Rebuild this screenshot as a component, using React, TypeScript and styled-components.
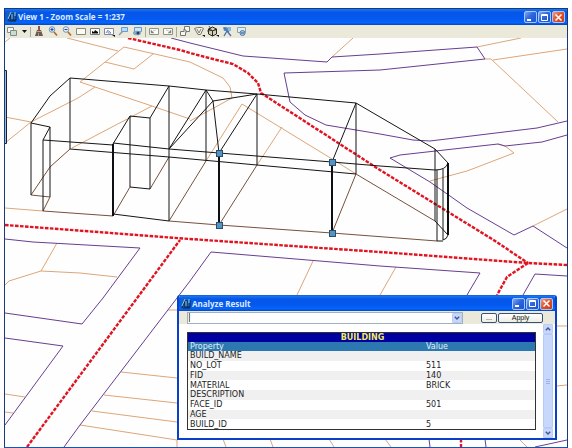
import React from 'react';
import styled, { createGlobalStyle } from 'styled-components';

const GlobalStyle = createGlobalStyle`
  *, *::before, *::after { box-sizing: border-box; }
  body { margin: 0; background: #fff; }
  button, input { font: inherit; margin: 0; padding: 0; }
`;

const Desktop = styled.main`
  display: flex;
  height: 100vh;
  padding: 8px 4px 0;
  font-family: 'DejaVu Sans', Verdana, sans-serif;
  font-size: 8px;
  color: #222;
`;

const ViewWindow = styled.section`
  position: relative;
  display: flex;
  flex-direction: column;
  flex: 1;
  min-width: 0;
  border: 1px solid #173a78;
  border-bottom-color: #1c52b4;
  background: #fefefe;
`;

const TitleBar = styled.header<{ $dialog?: boolean }>`
  display: flex;
  align-items: center;
  gap: 1px;
  flex: none;
  height: ${(p) => (p.$dialog ? 15 : 16)}px;
  padding: 0 2px;
  background: linear-gradient(#1c78f0 0, #0656e8 20%, #0458ee 60%, #0566fc 85%, #0346c4 100%);
`;

const Title = styled.h1`
  flex: 1;
  margin: 0;
  font: bold 8px/12px 'Open Sans', 'Noto Sans', sans-serif;
  color: #dcebff;
  white-space: nowrap;
`;

const CaptionButton = styled.button<{ $close?: boolean }>`
  display: grid;
  place-items: center;
  width: 13px;
  height: 12px;
  border: 1px solid #a9c6f6;
  border-radius: 2px;
  background: ${(p) =>
    p.$close
      ? 'linear-gradient(135deg, #f0a084, #e05430 45%, #c83c18)'
      : 'linear-gradient(135deg, #7fa8f4, #2f68e0 45%, #1c50cc)'};
`;

const ToolBar = styled.nav`
  display: flex;
  align-items: center;
  flex: none;
  height: 13px;
  background: #ebe9da;
`;

const ToolButton = styled.button<{ $narrow?: boolean }>`
  display: grid;
  place-items: center;
  width: ${(p) => (p.$narrow ? 10 : 14)}px;
  height: 13px;
  border: 0;
  background: none;
`;

const Divider = styled.span`
  width: 1px;
  height: 10px;
  margin: 0 1px;
  background: #aaa899;
`;

const Drawing = styled.svg`
  display: block;
  flex: 1;
  width: 100%;
  min-height: 0;
`;

const Dialog = styled.section`
  position: absolute;
  right: 10px;
  bottom: 7px;
  display: flex;
  flex-direction: column;
  width: 380px;
  height: 145px;
  border: 2px solid #0840c8;
  border-top: 1px solid #1464e4;
  border-radius: 3px 3px 0 0;
  overflow: hidden;
  background: #fff;
`;

const QueryBar = styled.form`
  display: flex;
  align-items: center;
  flex: none;
  height: 13px;
  padding: 0 12px 0 8px;
  background: #ebe9da;
`;

const Combo = styled.div`
  display: flex;
  flex: 1;
  height: 12px;
  margin-right: 18px;
  border: 1px solid #9fb0bf;
  background: #fff;
`;

const ComboInput = styled.input`
  flex: 1;
  min-width: 0;
  border: 0;
  outline: 0;
  background: none;
  font-size: 8px;
  line-height: 10px;
`;

const ArrowButton = styled.button`
  display: grid;
  place-items: center;
  flex: none;
  width: 10px;
  height: 10px;
  border: 1px solid #b9cdf8;
  border-radius: 1px;
  background: #c6d6fc;
`;

const PushButton = styled.button<{ $wide?: boolean }>`
  width: ${(p) => (p.$wide ? 45 : 16)}px;
  height: 10px;
  margin-left: ${(p) => (p.$wide ? 1 : 0)}px;
  border: 1px solid #34547c;
  border-radius: 2px;
  background: linear-gradient(#fff, #eeede4);
  font: 7px/8px 'Liberation Sans', Arial, sans-serif;
  color: #111;
`;

const ResultArea = styled.div`
  display: flex;
  flex: 1;
  align-items: flex-start;
  justify-content: space-between;
  padding: 0 2px 0 8px;
`;

const ResultTable = styled.table`
  flex: 1;
  height: 98px;
  margin: 8px 7px 0 0;
  table-layout: fixed;
  border: 1px solid #333;
  border-spacing: 0;
  line-height: 9px;

  th, td {
    padding: 0 0 0 2px;
    text-align: left;
    font-weight: normal;
  }
`;

const PropertyColumn = styled.col`
  width: 68%;
`;

const LayerRow = styled.tr`
  background: #0000a0;
  color: #f0ec60;
  && th { text-align: center; font-weight: bold; }
`;

const HeadRow = styled.tr`
  background: #2c78b0;
  color: #e4f2fa;
`;

const DataRow = styled.tr`
  &:nth-child(odd) { background: #f0f0f0; }
`;

const ScrollBar = styled.div`
  display: flex;
  flex-direction: column;
  align-self: stretch;
  width: 10px;
  background: #f2f3fa;
`;

const Thumb = styled.div`
  display: grid;
  place-items: center;
  flex: 1;
  border: 1px solid #b6c9f6;
  border-radius: 1px;
  background: #c8d8fd;
`;

const Chevron = ({ up }: { up?: boolean }) => (
  <svg width="6" height="4" viewBox="0 0 6 4" fill="none" stroke="#40588c" strokeWidth="1.4">
    <path d={up ? 'M.8 3.2 3 1 5.2 3.2' : 'M.8 .8 3 3 5.2 .8'} />
  </svg>
);

const AppLogo = () => (
  <svg width="10" height="12" viewBox="0 0 10 12" fill="none">
    <path d="M0 1h10v10H0z" fill="#1762b4" />
    <path d="M1 10 4 2v8M3 7h2M6 2v7h3V2M2 10h7" stroke="#0b2a5e" strokeWidth="1.1" />
    <path d="M1 8 4 1M5 3v5M8 1v4" stroke="#9bd8fa" strokeWidth=".9" />
  </svg>
);

const WindowButtons = () => (
  <>
    <CaptionButton type="button" aria-label="Minimize">
      <svg width="9" height="9"><path d="M1 7h4" stroke="#fff" strokeWidth="2" /></svg>
    </CaptionButton>
    <CaptionButton type="button" aria-label="Maximize">
      <svg width="9" height="9" fill="none" stroke="#fff"><path d="M1.5 1.5h6v6h-6zM1 2.5h7" /></svg>
    </CaptionButton>
    <CaptionButton type="button" aria-label="Close" $close>
      <svg width="9" height="9"><path d="m1.5 1.5 6 6m0-6-6 6" stroke="#fff" strokeWidth="1.5" /></svg>
    </CaptionButton>
  </>
);

const icons: Record<string, React.ReactNode> = {
  'View attributes': (
    <g stroke="#7f8f88"><path d="M1.5 1.5h6v5h-6z" fill="#f7f9f2" /><path d="M4.5 4.5h6v5h-6z" fill="#cbddd3" /></g>
  ),
  'Update view': (
    <><path d="M5 0h2v5H5z" fill="#8a5a4a" /><path d="M4 4h4l2 6H2z" fill="#6a5a52" /><path d="M4 5h4v1H4z" fill="#e19568" /><path d="M5.500 7v3" stroke="#a89c94" /></>
  ),
  'Zoom in': (
    <><circle cx="5" cy="3.500" r="2.800" fill="#d6e5f8" stroke="#7b94b7" /><path d="M5 2v3M3.500 3.500h3" stroke="#174b98" /><path d="m7 6 3 3.500" stroke="#b16a35" strokeWidth="1.700" /></>
  ),
  'Zoom out': (
    <><circle cx="5" cy="3.500" r="2.800" fill="#e7edf5" stroke="#8493a6" /><path d="M3.500 3.500h3" stroke="#174b98" /><path d="m7 6 3 3.500" stroke="#b16a35" strokeWidth="1.700" /></>
  ),
  'Window area': <path d="M1.500 2.500h9v6h-9z" fill="#fbfbf2" stroke="#85897f" />,
  'Fit view': (
    <><path d="M1.500 2.500h9v6h-9z" fill="#fff" stroke="#777c7a" /><path d="M3 7.500V5l2 1 1-2 3 2v1.500z" fill="#080808" /></>
  ),
  'Rotate view': (
    <><path d="M1.500 2.500h9v6h-9z" fill="#fff" stroke="#7f85a0" /><path d="m3 7 2-3v3h3l-2-2" fill="none" stroke="#7c8ec4" /><path d="M9 9h3v2z" fill="#111" /></>
  ),
  'Pan view': (
    <><path d="m2 9 4-4" stroke="#879ab3" strokeWidth="1.500" /><path d="M4.500 1.500h6v4h-6z" fill="#b9daf9" stroke="#679ad1" /></>
  ),
  'Walk view': (
    <><path d="M3.500 1.500h7v4h-7z" fill="#d3e6f2" stroke="#5f9ad0" /><ellipse cx="6" cy="7" rx="4" ry="2.300" fill="#8aa6bd" /><circle cx="7" cy="7" r="1.500" fill="#1c3f70" /></>
  ),
  'View previous': (
    <><path d="M1.500 2.500h9v6h-9z" fill="#fcfcf4" stroke="#8a938c" /><path d="M3 4v3h3zM5 5l3-1" fill="#666e70" stroke="#a0a6a4" strokeWidth=".6" /></>
  ),
  'View next': (
    <><path d="M1.500 2.500h9v6h-9z" fill="#fcfcf4" stroke="#8a938c" /><path d="M9 4v3H6zM4 4l3 1" fill="#666e70" stroke="#a0a6a4" strokeWidth=".6" /></>
  ),
  'Copy view': (
    <g fill="#f7f7ed" stroke="#727873"><path d="M5.500.5h5v5h-5zM1.500 5.500h5v4h-5z" /><path d="M4 4h3v3" /></g>
  ),
  'Clip volume': (
    <><path d="m1.500 2.500 3-1h4l2 1-3 6H5z" fill="#f7f4e8" stroke="#77756e" /><path d="m4 3 2 4 2-4" fill="none" stroke="#807e77" /><path d="M9 9h3v2z" fill="#111" /></>
  ),
  'Clip mask': (
    <><path d="m1.500 3 4-2 4 2v5l-4 2-4-2zM1.500 3l4 2 4-2M5.500 5v5" fill="#d4d0b8" stroke="#292921" /><path d="M2 0 5 5M0 5l9-1" stroke="#3b3a2c" strokeWidth=".8" /><path d="M9 9h3v2z" fill="#111" /></>
  ),
  'Camera': (
    <><path d="M2 1h4l2 2-2 2H3z" fill="#5b98d4" /><path d="M6 5 3 10m3-5 4 5M3 2l5 4" stroke="#4c6fa7" strokeWidth="1.300" /><path d="M7 1h3v4H7z" fill="#86b9e0" /></>
  ),
  'Render': (
    <><path d="M2.500 1.500h8v5h-8z" fill="#e3eef3" stroke="#82a5b8" /><circle cx="7.500" cy="7" r="2.500" fill="#a4c9df" stroke="#5678a8" /><path d="M6 7h3" stroke="#315c9a" /></>
  ),
};

const Tool = ({ name }: { name: string }) => (
  <ToolButton type="button" aria-label={name}>
    <svg width="12" height="11" viewBox="0 0 12 11">{icons[name]}</svg>
  </ToolButton>
);

const toolGroups = [
  ['Update view', 'Zoom in', 'Zoom out', 'Window area', 'Fit view', 'Rotate view', 'Pan view', 'Walk view'],
  ['View previous', 'View next'],
  ['Copy view', 'Clip volume', 'Clip mask', 'Camera', 'Render'],
];

const parcels = `
  M5 42 10 38M67 38 118 51M190 62 124 47 80 82 152 106 190 119M105 62 134 69 153 54
  M190 62 223 78 230 87 232 98 190 121M95 87 78 98 31 122 5 143M5 117 31 122M152 106 72 148
  M356 174 337 162 242 104 206 161M282 127 257 165M353 38 332 57M477 47 521 38M493 60 567 49
  M485 59 491 59 558 122M498 144 505 146 514 153 467 171 430 181M533 226 567 209M5 208 43 211
  M57 243 41 271 9 281 5 285M41 271 80 273 117 277M5 394 25 397M5 412 13 413
  M168 310H177M121 372 177 378M104 395 177 403M92 411 177 422M80 425 177 440V447
  M313 261 297 295M396 267 380 295M556 326H567M556 386 567 385
  M223 439 226 447M270 439 273 447M329 439 334 447M385 439 391 447M519 439 527 447`;

const boundaries = `
  M171 38 190 43 243 56 327 62 332 57 380 54 477 47 485 59 380 70 284 73 290 102 305 115 326 125 380 134 413 140 430 141 537 128 567 121
  M567 135 542 142 505 146 498 144 400 155 390 158 430 182 450 196 467 208 514 235 533 226 567 248
  M5 239 33 242 140 248 103 298 82 324 5 313M5 338 63 346 5 425
  M64 447 80 425 190 281 211 252 380 266 480 273 467 295M523 295 535 274 567 276
  M429 439 430 447M485 439 486 447M535 447 567 440`;

const roads = [
  'M128 38 180 50 190 53 213 59 233 64 248 73 258 83 261 93 380 170 492 239 528 263',
  'M5 225 190 239 380 252 528 263 567 265',
  'M528 263 507 277 497 295',
  'M27 447 180 240',
  'M461 439V447',
];

const walls = `
  M31 123 50 96 70 78 169 86 206 90 257 94 356 103 380 117 435 149 448 163
  M31 123 50 127 43 140 113 145M113 143 169 149 219 153 332 162 380 166 435 170Q446 170 448 163
  M70 78V149L169 157 257 165 356 174V103L332 162M31 123V195M50 127V197M43 140V211
  M113 144 130 116 150 118 169 86V221L113 214M130 116V187L150 189V118
  M169 149 206 90 213 101 257 94 219 153 213 101 169 149M206 90V161M257 94V165
  M435 149V221L448 235M437 170V241M443 169V240Q447 239 448 235M437 241 443 241`;

const footprint = `
  M70 149 50 167 31 195 50 197 43 211 113 216 130 187M150 189 169 157
  M206 161 169 221 219 225 332 233 437 241M257 165 219 225M332 233 356 174 435 221`;

const handles = [[219, 153], [332, 162], [219, 225], [332, 233]];

const SiteDrawing = () => (
  <Drawing viewBox="5 38 562 409" preserveAspectRatio="xMinYMin slice" role="img" aria-label="Building wireframe" fill="none">
    <path d={parcels} stroke="#dda678" />
    <path d={boundaries} stroke="#673e91" />
    {roads.map((d) => (
      <path key={d} d={d} stroke="#e01420" strokeWidth="2.4" strokeDasharray="3.6 1.400" />
    ))}
    <path d={footprint} stroke="#77503e" />
    <path d={walls} stroke="#151515" />
    <path d="M113 144V216M219 153V225M332 162V233M448 163V235" stroke="#0c1014" strokeWidth="2" />
    <path d="M4 70.500h2.500v73H4" fill="#9bb7e0" stroke="#14233c" />
    {handles.map(([x, y]) => (
      <rect key={`${x}-${y}`} x={x - 2.5} y={y - 2.5} width="6" height="6" fill="#5594c2" stroke="#28506e" />
    ))}
  </Drawing>
);

const properties = [
  ['BUILD_NAME', ''],
  ['NO_LOT', '511'],
  ['FID', '140'],
  ['MATERIAL', 'BRICK'],
  ['DESCRIPTION', ''],
  ['FACE_ID', '501'],
  ['AGE', ''],
  ['BUILD_ID', '5'],
];

const AnalyzeDialog = () => (
  <Dialog role="dialog" aria-label="Analyze Result">
    <TitleBar $dialog>
      <AppLogo />
      <Title as="h2">Analyze Result</Title>
      <WindowButtons />
    </TitleBar>
    <QueryBar onSubmit={(e) => e.preventDefault()}>
      <Combo>
        <ComboInput aria-label="Query" defaultValue="|" />
        <ArrowButton type="button" aria-label="Show queries"><Chevron /></ArrowButton>
      </Combo>
      <PushButton type="button">...</PushButton>
      <PushButton type="submit" $wide>Apply</PushButton>
    </QueryBar>
    <ResultArea>
      <ResultTable>
        <colgroup><PropertyColumn /><col /></colgroup>
        <thead>
          <LayerRow><th colSpan={2}>BUILDING</th></LayerRow>
          <HeadRow><th scope="col">Property</th><th scope="col">Value</th></HeadRow>
        </thead>
        <tbody>
          {properties.map(([name, value]) => (
            <DataRow key={name}><td>{name}</td><td>{value}</td></DataRow>
          ))}
        </tbody>
      </ResultTable>
      <ScrollBar>
        <ArrowButton type="button" aria-label="Scroll up"><Chevron up /></ArrowButton>
        <Thumb>
          <svg width="4" height="5"><path d="M0 .5h4M0 2.500h4M0 4.500h4" stroke="#9db4e8" /></svg>
        </Thumb>
        <ArrowButton type="button" aria-label="Scroll down"><Chevron /></ArrowButton>
      </ScrollBar>
    </ResultArea>
  </Dialog>
);

export default function App() {
  return (
    <>
      <GlobalStyle />
      <Desktop>
        <ViewWindow>
          <TitleBar>
            <AppLogo />
            <Title>View 1 - Zoom Scale = 1:237</Title>
            <WindowButtons />
          </TitleBar>
          <ToolBar aria-label="View tools">
            <Tool name="View attributes" />
            <ToolButton type="button" aria-label="More attributes" $narrow>
              <svg width="5" height="3"><path d="M0 0h5L2.500 3z" fill="#111" /></svg>
            </ToolButton>
            {toolGroups.map((group) => (
              <React.Fragment key={group[0]}>
                <Divider />
                {group.map((name) => <Tool key={name} name={name} />)}
              </React.Fragment>
            ))}
          </ToolBar>
          <SiteDrawing />
          <AnalyzeDialog />
        </ViewWindow>
      </Desktop>
    </>
  );
}
